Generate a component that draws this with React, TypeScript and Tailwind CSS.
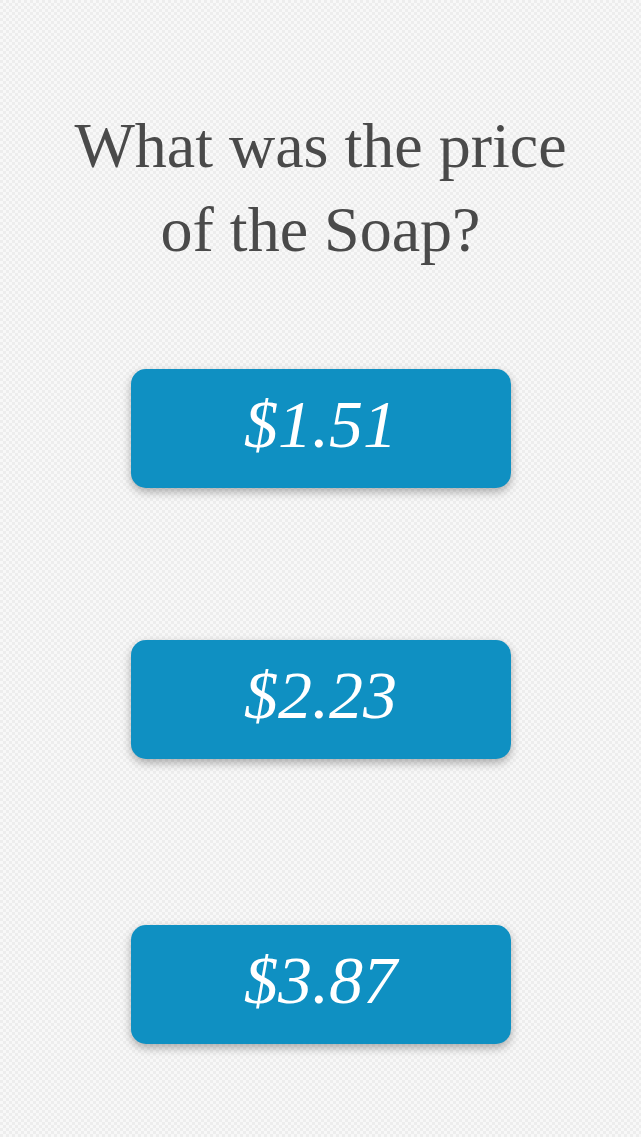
export default function App() {
  const answers = [
    { label: "$1.51", mt: "mt-[93px]" },
    { label: "$2.23", mt: "mt-[152px]" },
    { label: "$3.87", mt: "mt-[166px]" },
  ];

  return (
    <main
      className="min-h-[1137px] w-full bg-[#ededed] bg-[linear-gradient(45deg,rgba(255,255,255,0.6)_25%,transparent_25%,transparent_75%,rgba(255,255,255,0.6)_75%),linear-gradient(45deg,rgba(255,255,255,0.6)_25%,transparent_25%,transparent_75%,rgba(255,255,255,0.6)_75%)] bg-[length:6px_6px] bg-[position:0_0,3px_3px] flex flex-col items-center pt-[104px]"
      style={{ fontFamily: '"Liberation Serif", "DejaVu Serif", serif' }}
    >
      <h1 className="text-center text-[64px] leading-[84px] text-[#4a4a4a] font-normal mb-[4px]">
        What was the price
        <br />
        of the Soap?
      </h1>

      {answers.map((a) => (
        <button
          key={a.label}
          type="button"
          className={`${a.mt} w-[380px] h-[119px] rounded-[15px] bg-[#0f90c2] text-white italic text-[68px] leading-none flex items-center justify-center pb-[10px] shadow-[0_4px_10px_rgba(0,0,0,0.3)]`}
        >
          {a.label}
        </button>
      ))}
    </main>
  );
}
